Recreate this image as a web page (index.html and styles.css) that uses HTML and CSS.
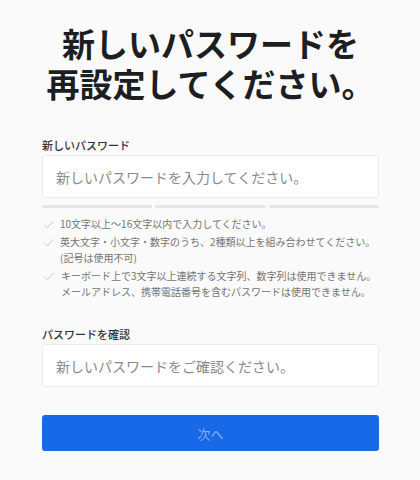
FILE: index.html
```html
<!DOCTYPE html>
<html lang="ja">
<head>
<meta charset="utf-8">
<link rel="stylesheet" href="styles.css">
</head>
<body>
<main class="page">
  <h1 class="title"><span class="title-line">新しいパスワードを</span><span class="title-line">再設定してください。</span></h1>

  <label class="label" for="pw1">新しいパスワード</label>
  <input class="field" id="pw1" type="password" placeholder="新しいパスワードを入力してください。">

  <div class="strength">
    <span class="seg"></span><span class="seg"></span><span class="seg"></span>
  </div>

  <ul class="rules">
    <li class="rule"><svg class="check" viewBox="0 0 12 10"><path d="M1 5.5 L4.2 8.6 L11 1.2"/></svg><span>10文字以上〜16文字以内で入力してください。</span></li>
    <li class="rule"><svg class="check" viewBox="0 0 12 10"><path d="M1 5.5 L4.2 8.6 L11 1.2"/></svg><span>英大文字・小文字・数字のうち、2種類以上を組み合わせてください。<br>(記号は使用不可)</span></li>
    <li class="rule"><svg class="check" viewBox="0 0 12 10"><path d="M1 5.5 L4.2 8.6 L11 1.2"/></svg><span class="shift">キーボード上で3文字以上連続する文字列、数字列は使用できません。<br>メールアドレス、携帯電話番号を含むパスワードは使用できません。</span></li>
  </ul>

  <label class="label label-confirm" for="pw2">パスワードを確認</label>
  <input class="field" id="pw2" type="password" placeholder="新しいパスワードをご確認ください。">

  <button class="next" type="button">次へ</button>
</main>
</body>
</html>
```

FILE: styles.css
```css
html, body {
  margin: 0;
  padding: 0;
  background: #fafafa;
}
body {
  font-family: "Noto Sans CJK JP", "Noto Sans", sans-serif;
  color: #222;
}
.page {
  display: flex;
  flex-direction: column;
  padding: 0 41px 0 42px;
}
.title {
  margin: 23px 0 0;
  display: flex;
  flex-direction: column;
  font-size: 33px;
  font-weight: 700;
  text-align: center;
  color: #1c1e22;
}
.title-line {
  display: block;
  height: 40px;
  line-height: 40px;
  overflow: visible;
}
.label {
  display: block;
  margin-top: 35px;
  font-size: 11px;
  line-height: 14px;
  font-weight: 500;
  color: #333;
}
.label-confirm {
  margin-top: 27px;
}
.field {
  box-sizing: border-box;
  margin-top: 3px;
  width: 100%;
  height: 43px;
  padding: 0 13px;
  border: 1px solid #ebebeb;
  border-radius: 3px;
  background: #fff;
  font-family: inherit;
  font-size: 14px;
  color: #333;
  outline: none;
}
.field::placeholder {
  color: #8a8a8a;
}
.strength {
  display: flex;
  gap: 3px;
  margin-top: 7px;
}
.seg {
  flex: 1;
  height: 3px;
  border-radius: 2px;
  background: #e3e5e8;
}
.rules {
  list-style: none;
  margin: 8px 0 0;
  padding: 0;
  display: flex;
  flex-direction: column;
  gap: 2px;
}
.rule {
  display: flex;
  align-items: flex-start;
  font-size: 10px;
  line-height: 16px;
  color: #737373;
}
.check {
  flex: none;
  width: 12px;
  height: 9px;
  margin: 4px 5px 0 1px;
  fill: none;
  stroke: #c6c6c6;
  stroke-width: 1;
}
.shift {
  margin-left: 1px;
}
.next {
  margin-top: 28px;
  height: 36px;
  border: none;
  border-radius: 3px;
  background: #1769e8;
  color: #86aee9;
  font-family: inherit;
  font-size: 13px;
}
```
